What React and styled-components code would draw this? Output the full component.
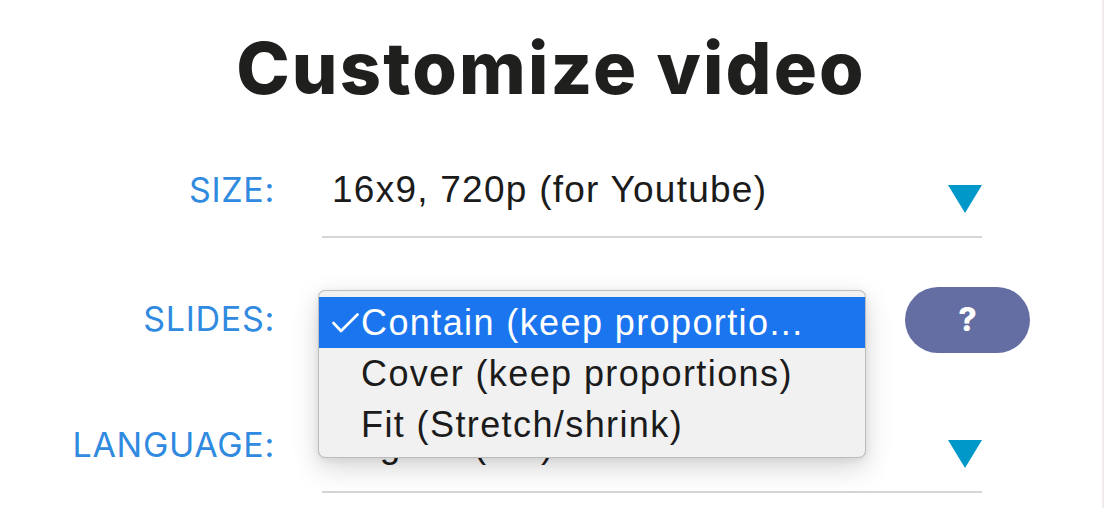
import React from "react";
import styled, { createGlobalStyle } from "styled-components";

const Global = createGlobalStyle`
  html, body { margin: 0; padding: 0; background: #ffffff; }
  body { font-family: "Liberation Sans", Arial, sans-serif; }
`;

const Page = styled.div`
  width: 1102px;
  min-height: 508px;
  border-right: 2px solid #f1ebeb;
  overflow: hidden;
`;

const Title = styled.h1`
  margin: 32px 0 0;
  text-align: center;
  font-family: Inter, "Noto Sans", sans-serif;
  font-weight: 800;
  font-size: 72px;
  line-height: 72px;
  color: #1f1f1e;
  letter-spacing: 2.2px;
`;

const Form = styled.div`
  display: flex;
  flex-direction: column;
  margin-top: 62px;
`;

const Row = styled.div`
  display: flex;
  align-items: baseline;
  margin-top: ${(p) => p.$top || 0}px;
`;

const Label = styled.div`
  width: 275px;
  flex: none;
  text-align: right;
  font-family: Inter, "Noto Sans", sans-serif;
  font-weight: 400;
  font-size: 34px;
  line-height: 48px;
  color: #2f8ae0;
  letter-spacing: 0.7px;
`;

const Field = styled.div`
  position: relative;
  margin-left: 47px;
  width: ${(p) => p.$width}px;
  flex: none;
  display: flex;
  align-items: flex-start;
  justify-content: space-between;
  padding: 0 0 22px 10px;
  box-sizing: border-box;
  border-bottom: 2px solid #d7d4d4;
`;

const Value = styled.span`
  font-family: "Liberation Sans", Arial, sans-serif;
  font-size: 37px;
  line-height: 48px;
  letter-spacing: 1.25px;
  color: #1b1b1b;
  white-space: nowrap;
`;

const Arrow = styled.svg`
  flex: none;
  margin-top: 19px;
  display: block;
`;

const HelpButton = styled.button`
  margin-left: 39px;
  width: 125px;
  height: 66px;
  border: none;
  border-radius: 33px;
  background: #646ea3;
  color: #ffffff;
  font-family: Inter, "Noto Sans", sans-serif;
  font-weight: 800;
  font-size: 32px;
  line-height: 66px;
  padding: 0;
  text-align: center;
  cursor: pointer;
`;

const Menu = styled.div`
  position: absolute;
  left: -4px;
  top: -5px;
  width: 548px;
  height: 168px;
  box-sizing: border-box;
  padding-top: 6px;
  background: #f1f1f1;
  border: 1px solid rgba(0, 0, 0, 0.22);
  border-radius: 7px;
  box-shadow: 0 10px 28px rgba(0, 0, 0, 0.16), 0 2px 8px rgba(0, 0, 0, 0.08);
  z-index: 5;
  overflow: hidden;
`;

const Item = styled.div`
  display: flex;
  align-items: center;
  height: 51px;
  background: ${(p) => (p.$active ? "#1b75ef" : "transparent")};
  color: ${(p) => (p.$active ? "#ffffff" : "#1b1b1b")};
  font-family: "Liberation Sans", Arial, sans-serif;
  font-size: 36px;
  letter-spacing: 1.4px;
  white-space: nowrap;
`;

const CheckSlot = styled.span`
  width: 42px;
  flex: none;
  display: flex;
  justify-content: flex-end;
  padding-right: 2px;
  box-sizing: border-box;
`;

const TriangleIcon = () => (
  <Arrow width="34" height="28" viewBox="0 0 34 28">
    <polygon points="0,0 34,0 17,28" fill="#0097c9" />
  </Arrow>
);

const Check = () => (
  <svg width="27" height="20" viewBox="0 0 27 20">
    <polyline
      points="1.5,10 9,18 25.5,1.5"
      fill="none"
      stroke="#ffffff"
      strokeWidth="2.6"
      strokeLinecap="round"
      strokeLinejoin="round"
    />
  </svg>
);

const options = [
  { label: "Contain (keep proportio...", active: true },
  { label: "Cover (keep proportions)" },
  { label: "Fit (Stretch/shrink)" },
];

export default function App() {
  return (
    <>
      <Global />
      <Page>
        <Title>Customize video</Title>
        <Form>
          <Row>
            <Label>SIZE:</Label>
            <Field $width={660}>
              <Value>16x9, 720p (for Youtube)</Value>
              <TriangleIcon />
            </Field>
          </Row>
          <Row $top={49}>
            <Label>SLIDES:</Label>
            <Field $width={544}>
              <Value>Contain (keep proportions)</Value>
              <TriangleIcon />
              <Menu>
                {options.map((o) => (
                  <Item key={o.label} $active={o.active}>
                    <CheckSlot>{o.active ? <Check /> : null}</CheckSlot>
                    {o.label}
                  </Item>
                ))}
              </Menu>
            </Field>
            <HelpButton>?</HelpButton>
          </Row>
          <Row $top={54}>
            <Label>LANGUAGE:</Label>
            <Field $width={660}>
              <Value>English (US)</Value>
              <TriangleIcon />
            </Field>
          </Row>
        </Form>
      </Page>
    </>
  );
}
